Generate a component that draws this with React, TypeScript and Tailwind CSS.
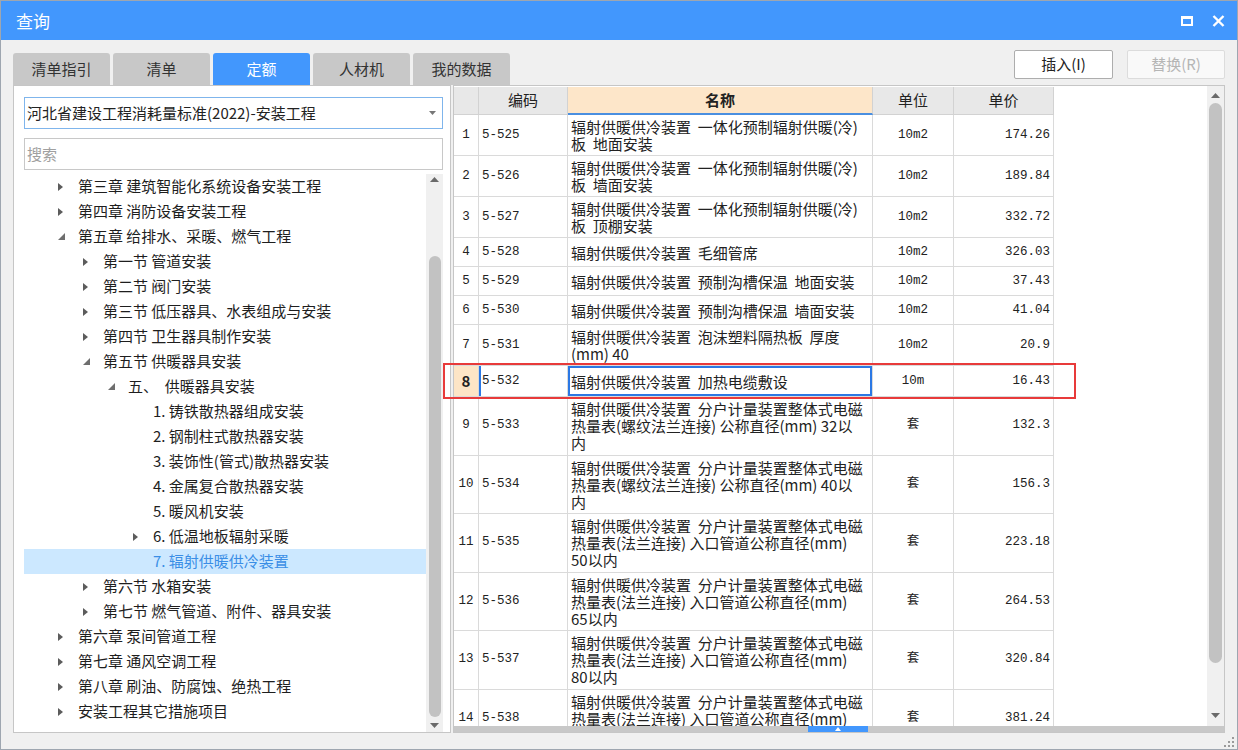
import React from "react";

type TreeItem = { l: number; t: string; s?: "c" | "e"; sel?: boolean };

const tree: TreeItem[] = [
  { l: 0, t: "第三章 建筑智能化系统设备安装工程", s: "c" },
  { l: 0, t: "第四章 消防设备安装工程", s: "c" },
  { l: 0, t: "第五章 给排水、采暖、燃气工程", s: "e" },
  { l: 1, t: "第一节 管道安装", s: "c" },
  { l: 1, t: "第二节 阀门安装", s: "c" },
  { l: 1, t: "第三节 低压器具、水表组成与安装", s: "c" },
  { l: 1, t: "第四节 卫生器具制作安装", s: "c" },
  { l: 1, t: "第五节 供暖器具安装", s: "e" },
  { l: 2, t: "五、  供暖器具安装", s: "e" },
  { l: 3, t: "1. 铸铁散热器组成安装" },
  { l: 3, t: "2. 钢制柱式散热器安装" },
  { l: 3, t: "3. 装饰性(管式)散热器安装" },
  { l: 3, t: "4. 金属复合散热器安装" },
  { l: 3, t: "5. 暖风机安装" },
  { l: 3, t: "6. 低温地板辐射采暖", s: "c" },
  { l: 3, t: "7. 辐射供暖供冷装置", sel: true },
  { l: 1, t: "第六节 水箱安装", s: "c" },
  { l: 1, t: "第七节 燃气管道、附件、器具安装", s: "c" },
  { l: 0, t: "第六章 泵间管道工程", s: "c" },
  { l: 0, t: "第七章 通风空调工程", s: "c" },
  { l: 0, t: "第八章 刷油、防腐蚀、绝热工程", s: "c" },
  { l: 0, t: "安装工程其它措施项目", s: "c" },
];

const indent = ["pl-[34px]", "pl-[59px]", "pl-[84px]", "pl-[109px]"];

const head = "辐射供暖供冷装置  ";
const meter = "分户计量装置整体式电磁";

type Row = { n: number; code: string; name: string[]; unit: string; price: string; h: string };

const rows: Row[] = [
  { n: 1, code: "5-525", name: [head + "一体化预制辐射供暖(冷)", "板  地面安装"], unit: "10m2", price: "174.26", h: "h-[41px]" },
  { n: 2, code: "5-526", name: [head + "一体化预制辐射供暖(冷)", "板  墙面安装"], unit: "10m2", price: "189.84", h: "h-[41px]" },
  { n: 3, code: "5-527", name: [head + "一体化预制辐射供暖(冷)", "板  顶棚安装"], unit: "10m2", price: "332.72", h: "h-[41px]" },
  { n: 4, code: "5-528", name: [head + "毛细管席"], unit: "10m2", price: "326.03", h: "h-[29px]" },
  { n: 5, code: "5-529", name: [head + "预制沟槽保温  地面安装"], unit: "10m2", price: "37.43", h: "h-[29px]" },
  { n: 6, code: "5-530", name: [head + "预制沟槽保温  墙面安装"], unit: "10m2", price: "41.04", h: "h-[29px]" },
  { n: 7, code: "5-531", name: [head + "泡沫塑料隔热板  厚度", "(mm) 40"], unit: "10m2", price: "20.9", h: "h-[41px]" },
  { n: 8, code: "5-532", name: [head + "加热电缆敷设"], unit: "10m", price: "16.43", h: "h-[31px]" },
  { n: 9, code: "5-533", name: [head + meter, "热量表(螺纹法兰连接) 公称直径(mm) 32以", "内"], unit: "套", price: "132.3", h: "h-[58.5px]" },
  { n: 10, code: "5-534", name: [head + meter, "热量表(螺纹法兰连接) 公称直径(mm) 40以", "内"], unit: "套", price: "156.3", h: "h-[58.5px]" },
  { n: 11, code: "5-535", name: [head + meter, "热量表(法兰连接) 入口管道公称直径(mm)", "50以内"], unit: "套", price: "223.18", h: "h-[58.5px]" },
  { n: 12, code: "5-536", name: [head + meter, "热量表(法兰连接) 入口管道公称直径(mm)", "65以内"], unit: "套", price: "264.53", h: "h-[58.5px]" },
  { n: 13, code: "5-537", name: [head + meter, "热量表(法兰连接) 入口管道公称直径(mm)", "80以内"], unit: "套", price: "320.84", h: "h-[58.5px]" },
  { n: 14, code: "5-538", name: [head + meter, "热量表(法兰连接) 入口管道公称直径(mm)", "以内"], unit: "套", price: "381.24", h: "h-[58.5px]" },
];

const tabs = ["清单指引", "清单", "定额", "人材机", "我的数据"];

const mono = "font-['Liberation_Mono','Noto_Sans_CJK_SC',monospace] text-[12.5px]";

function Collapsed() {
  return (
    <svg width="5" height="8" viewBox="0 0 5 8">
      <path d="M0 0 L5 4 L0 8Z" fill="#5c5c5c" />
    </svg>
  );
}

function Expanded() {
  return (
    <svg width="7" height="7" viewBox="0 0 7 7">
      <path d="M7 0 L7 7 L0 7Z" fill="#6e6e6e" />
    </svg>
  );
}

function ArrowUp() {
  return (
    <svg width="9" height="5" viewBox="0 0 9 5">
      <path d="M0 5 L4.5 0 L9 5Z" fill="#6a6a6a" />
    </svg>
  );
}

function ArrowDown() {
  return (
    <svg width="9" height="5" viewBox="0 0 9 5">
      <path d="M0 0 L9 0 L4.5 5Z" fill="#6a6a6a" />
    </svg>
  );
}

export default function App() {
  return (
    <div className="relative w-[1238px] h-[750px] overflow-hidden border border-[#9ea6b0] bg-[#f0f0f0] font-['Noto_Sans_CJK_SC',sans-serif] text-[#222] flex flex-col">
      {/* title bar */}
      <div className="h-[39px] shrink-0 bg-[#4297fd] flex items-center justify-between pl-[15px] pr-[12px]">
        <span className="text-[17px] text-white">查询</span>
        <div className="flex items-center gap-[19px]">
          <svg width="12" height="10" viewBox="0 0 12 10">
            <rect x="1" y="1.5" width="10" height="7.5" fill="none" stroke="#fff" strokeWidth="2" />
            <rect x="0" y="0" width="12" height="3" fill="#fff" />
          </svg>
          <svg width="13" height="12" viewBox="0 0 13 12">
            <path d="M1.5 1 L11.5 11 M11.5 1 L1.5 11" stroke="#fff" strokeWidth="2.4" />
          </svg>
        </div>
      </div>

      <div className="flex-1 flex flex-col px-[12px]">
        {/* tabs + buttons */}
        <div className="h-[45px] shrink-0 flex justify-between">
          <div className="self-end flex gap-[3px]">
            {tabs.map((t, i) => (
              <div
                key={t}
                className={
                  i === 2
                    ? "w-[97px] h-[32px] rounded-t-[3px] bg-[#4297fd] text-white text-[15px] flex items-center justify-center"
                    : "w-[97px] h-[32px] rounded-t-[3px] bg-[#c8c8c8] text-[#333] text-[15px] flex items-center justify-center"
                }
              >
                {t}
              </div>
            ))}
          </div>
          <div className="self-start mt-[10px] flex gap-[14px]">
            <div className="w-[99px] h-[29px] rounded-[2px] border border-[#adadad] bg-white text-[15px] flex items-center justify-center">
              插入(I)
            </div>
            <div className="w-[98px] h-[29px] rounded-[2px] border border-[#dcdcdc] bg-[#f9f9f9] text-[#b5b5b5] text-[15px] flex items-center justify-center">
              替换(R)
            </div>
          </div>
        </div>

        {/* panels */}
        <div className="h-[648px] flex gap-[2px]">
          {/* left */}
          <div className="w-[438px] border border-[#c6c6c6] bg-white flex flex-col pl-[10px] pr-[7px] pt-[11px]">
            <div className="h-[32px] shrink-0 border border-[#7fb5ec] flex items-center justify-between pl-[2px] pr-[6px] text-[15px]">
              <span>河北省建设工程消耗量标准(2022)-安装工程</span>
              <svg width="7" height="4" viewBox="0 0 7 4">
                <path d="M0 0 L7 0 L3.5 4Z" fill="#777" />
              </svg>
            </div>
            <div className="mt-[9px] h-[32px] shrink-0 border border-[#c8c8c8] flex items-center pl-[2px] text-[15px] text-[#a0a0a0]">
              搜索
            </div>
            <div className="mt-[4px] flex-1 flex overflow-hidden">
              <div className="flex-1 overflow-hidden">
                {tree.map((it, i) => (
                  <div
                    key={i}
                    className={`h-[25px] flex items-center text-[15px] whitespace-pre ${indent[it.l]} ${
                      it.sel ? "bg-[#cce8ff] text-[#3a8ee6]" : "text-[#1e1e1e]"
                    }`}
                  >
                    <div className="w-[20px] shrink-0 flex items-center">
                      {it.s === "c" && <Collapsed />}
                      {it.s === "e" && <Expanded />}
                    </div>
                    <span>{it.t}</span>
                  </div>
                ))}
              </div>
              <div className="w-[17px] shrink-0 bg-[#f0f0f0] flex flex-col items-center pt-[3px] pb-[4px]">
                <ArrowUp />
                <div className="mt-[74px] w-[12px] h-[461px] rounded-full bg-[#c2c2c2]" />
                <div className="flex-1" />
                <ArrowDown />
              </div>
            </div>
          </div>

          {/* right */}
          <div className="flex-1 border border-[#c6c6c6] bg-white flex flex-col">
            <div className="flex-1 flex overflow-hidden">
              <div className="flex-1 overflow-hidden pt-px">
                {/* header */}
                <div className="flex h-[28px] text-[15px]">
                  <div className="w-[25px] bg-[#e8e8e8] border-r border-b border-[#d2d2d2]" />
                  <div className="w-[89px] bg-[#e8e8e8] border-r border-b border-[#d2d2d2] flex items-center justify-center">编码</div>
                  <div className="w-[305px] bg-[#fde6c9] border-r border-b-2 border-r-[#d2d2d2] border-b-[#4a8fe0] flex items-center justify-center font-bold">名称</div>
                  <div className="w-[81px] bg-[#e8e8e8] border-r border-b border-[#d2d2d2] flex items-center justify-center">单位</div>
                  <div className="w-[100px] bg-[#e8e8e8] border-r border-b border-[#d2d2d2] flex items-center justify-center">单价</div>
                </div>
                {rows.map((r) => {
                  const sel = r.n === 8;
                  return (
                    <div key={r.n} className={`flex shrink-0 ${r.h}`}>
                      <div
                        className={
                          sel
                            ? "w-[25px] bg-[#fde5c6] border-r border-b border-[#dadada] flex items-center justify-center text-[15px] font-bold"
                            : `w-[25px] border-r border-b border-[#dadada] flex items-center justify-center ${mono}`
                        }
                      >
                        {r.n}
                      </div>
                      <div
                        className={`w-[89px] border-r border-b border-[#dadada] flex items-center pl-[3px] ${mono} ${
                          sel ? "shadow-[inset_2px_0_0_#2b78e4]" : ""
                        }`}
                      >
                        {r.code}
                      </div>
                      <div
                        className={`w-[305px] border-r border-b border-[#dadada] flex flex-col justify-center pl-[3px] text-[15px] leading-[17px] overflow-hidden ${
                          sel ? "shadow-[inset_0_0_0_2px_#2b78e4]" : ""
                        }`}
                      >
                        {r.name.map((ln, k) => (
                          <div key={k} className="whitespace-pre">
                            {ln}
                          </div>
                        ))}
                      </div>
                      <div className={`w-[81px] border-r border-b border-[#dadada] flex items-center justify-center ${mono}`}>
                        {r.unit}
                      </div>
                      <div className={`w-[100px] border-r border-b border-[#dadada] flex items-center justify-end pr-[3px] ${mono}`}>
                        {r.price}
                      </div>
                    </div>
                  );
                })}
              </div>
              <div className="w-[17px] shrink-0 bg-[#f0f0f0] flex flex-col items-center pt-[7px] pb-[8px]">
                <ArrowUp />
                <div className="mt-[5px] w-[13px] h-[560px] rounded-full bg-[#c2c2c2]" />
                <div className="flex-1" />
                <ArrowDown />
              </div>
            </div>
            <div className="h-[6px] shrink-0 bg-[#c8c8c8] flex pl-[354px]">
              <div className="w-[60px] h-full bg-[#4297fd] flex items-center justify-center">
                <svg width="6" height="4" viewBox="0 0 6 4">
                  <path d="M0 4 L3 0 L6 4Z" fill="#fff" />
                </svg>
              </div>
            </div>
          </div>
        </div>
      </div>

      {/* bottom strip + grip */}
      <div className="h-[16px] shrink-0 flex justify-end items-end pr-[3px] pb-[2px]">
        <svg width="11" height="11" viewBox="0 0 11 11">
          {[
            [9, 1],
            [9, 5],
            [5, 5],
            [9, 9],
            [5, 9],
            [1, 9],
          ].map(([x, y], i) => (
            <rect key={i} x={x} y={y} width="2" height="2" fill="#9a9a9a" />
          ))}
        </svg>
      </div>

      {/* red annotation */}
      <div className="absolute left-[442px] top-[362px] w-[633px] h-[36px] border-2 border-[#e83a3a]" />
    </div>
  );
}
